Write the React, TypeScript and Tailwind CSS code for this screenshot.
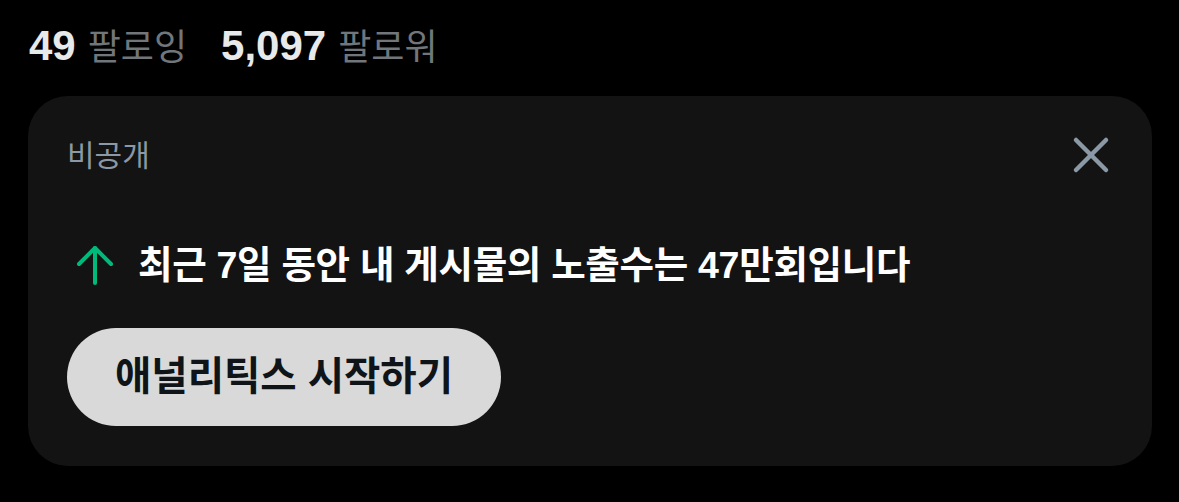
import { X } from 'lucide-react'

const font = { fontFamily: '"Liberation Sans", "Noto Sans CJK KR", sans-serif' }

function FollowStat({ count, label }: { count: string; label: string }) {
  return (
    <span className="flex items-baseline gap-[12px]">
      <span className="text-[42px] font-bold text-[#e7e9ea]">{count}</span>
      <span className="text-[36px] text-[#71767b]">{label}</span>
    </span>
  )
}

function ArrowUpIcon() {
  return (
    <svg width="36" height="40" viewBox="0 0 36 40" fill="none" stroke="#00ba7c" strokeWidth="4" strokeLinecap="round" strokeLinejoin="round">
      <path d="M18 38V3" />
      <path d="M2 19 18 3l16 16" />
    </svg>
  )
}

export default function App() {
  return (
    <div className="w-[1179px] h-[502px] bg-black overflow-hidden" style={font}>
      <div className="flex items-center gap-[34px] pl-[29px] h-[96px] pb-[6px]">
        <FollowStat count="49" label="팔로잉" />
        <FollowStat count="5,097" label="팔로워" />
      </div>

      <div className="ml-[28px] w-[1124px] h-[370px] rounded-[40px] bg-[#131313] flex flex-col pt-[39px] pl-[39px] pr-[31px]">
        <div className="flex items-center justify-between h-[40px]">
          <span className="text-[30px] text-[#8b98a5]">비공개</span>
          <X className="w-[60px] h-[60px] shrink-0 text-[#8b98a5]" strokeWidth={1.8} />
        </div>

        <div className="flex items-center gap-[25px] h-[44px] mt-[68px] pl-[10px]">
          <ArrowUpIcon />
          <span className="text-[37.5px] font-bold text-white tracking-[-0.3px]">
            최근 7일 동안 내 게시물의 노출수는 47만회입니다
          </span>
        </div>

        <button className="mt-[41px] w-[434px] h-[98px] rounded-full bg-[#d9d9d9] text-[#0f1419] text-[39.5px] font-bold flex items-center justify-center">
          애널리틱스 시작하기
        </button>
      </div>
    </div>
  )
}
